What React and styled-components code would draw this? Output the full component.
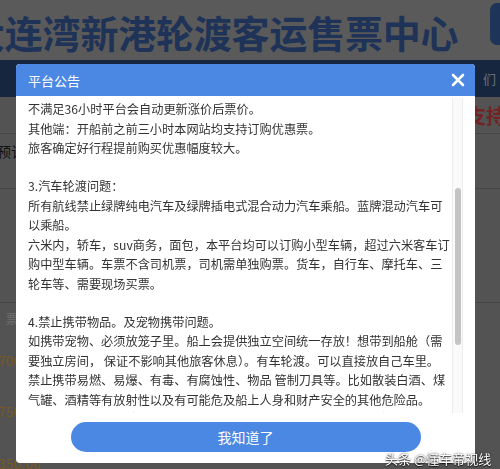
import React from "react";
import styled, { createGlobalStyle } from "styled-components";

const Global = createGlobalStyle`
  html, body { margin: 0; padding: 0; }
  body {
    width: 500px;
    height: 469px;
    overflow: hidden;
    font-family: "Noto Sans CJK SC", "Noto Sans", sans-serif;
    background: #a8a8a8;
  }
`;

/* ---------- background page ---------- */
const Page = styled.div`
  width: 500px;
  height: 469px;
  overflow: hidden;
  background: #a6a6a6;
  display: flex;
  flex-direction: column;
`;

const TopHeader = styled.header`
  height: 60px;
  flex: none;
  background: #b4b4b4;
  display: flex;
  align-items: center;
  justify-content: space-between;
  overflow: hidden;
`;

const SiteTitle = styled.h1`
  margin: 0 0 0 -33px;
  font-size: 38px;
  font-weight: 700;
  letter-spacing: -0.2px;
  color: #3c66ae;
  white-space: nowrap;
  line-height: 1;
  padding-top: 4px;
`;

const LoginBox = styled.div`
  width: 24px;
  height: 42px;
  margin-right: -14px;
  margin-top: -12px;
  border-radius: 7px;
  background: #3c68b0;
`;

const NavBar = styled.nav`
  height: 37px;
  flex: none;
  background: #2c4c7c;
  display: flex;
  justify-content: flex-end;
  align-items: center;
  padding-right: 4px;
  font-size: 13px;
  color: #d0dcee;
`;

const PageBody = styled.div`
  flex: 1;
  display: flex;
  flex-direction: column;
`;

const Strip = styled.div`
  height: ${(p) => p.$h}px;
  flex: none;
  display: flex;
  align-items: center;
  justify-content: space-between;
  border-bottom: ${(p) => (p.$line ? "1px solid #8a8a8a" : "none")};
  font-size: ${(p) => p.$size || 13}px;
  overflow: hidden;
`;

const PageText = styled.span`
  color: ${(p) => p.$color || "#222"};
  margin-left: ${(p) => p.$ml || 0}px;
  margin-right: ${(p) => p.$mr || 0}px;
  white-space: nowrap;
  font-weight: ${(p) => (p.$bold ? 700 : 400)};
`;

/* ---------- modal ---------- */
const Overlay = styled.div`
  position: fixed;
  inset: 0;
  background: rgba(0, 0, 0, 0.5);
  padding: 64px 0 0 16px;
`;

const Modal = styled.section`
  width: 459px;
  height: 399px;
  background: #fff;
  border-radius: 4px;
  overflow: hidden;
  display: flex;
  flex-direction: column;
`;

const ModalHeader = styled.div`
  height: 32px;
  flex: none;
  background: #4a88e4;
  display: flex;
  align-items: center;
  justify-content: space-between;
  padding: 0 8px 0 12px;
`;

const ModalTitle = styled.h2`
  margin: 0;
  font-size: 13px;
  font-weight: 400;
  color: #fff;
  line-height: 1;
`;

const CloseBtn = styled.button`
  border: 0;
  background: none;
  padding: 0;
  width: 18px;
  height: 18px;
  display: flex;
  align-items: center;
  justify-content: center;
  cursor: pointer;
`;

const BodyWrap = styled.div`
  position: relative;
  height: 317px;
  flex: none;
`;

const ScrollArea = styled.div`
  height: 100%;
  overflow: hidden;
  padding: 4px 0 0 12px;
  box-sizing: border-box;
`;

const Para = styled.div`
  margin-bottom: 18.5px;
`;

const Line = styled.div`
  font-size: 12.2px;
  line-height: 19.5px;
  height: 19.5px;
  color: #333;
  white-space: nowrap;
`;

const Track = styled.div`
  position: absolute;
  left: 436px;
  top: 2px;
  bottom: 0;
  width: 9px;
  border-left: 1px solid #ececec;
  border-right: 1px solid #ececec;
  background: #fafafa;
`;

const Thumb = styled.div`
  position: absolute;
  left: 2px;
  top: 90px;
  width: 6px;
  height: 157px;
  border-radius: 3px;
  background: #c4c4c4;
`;

const Footer = styled.div`
  flex: 1;
  display: flex;
  justify-content: center;
  padding-top: 9px;
`;

const OkButton = styled.button`
  width: 350px;
  height: 30px;
  border: 0;
  border-radius: 15px;
  background: #4a88e4;
  color: #fff;
  font-family: inherit;
  font-size: 14px;
  cursor: pointer;
`;

const Watermark = styled.div`
  position: fixed;
  left: 385px;
  top: 449px;
  font-size: 13px;
  color: #fff;
  text-shadow: 0 0 2px rgba(0, 0, 0, 0.8), 0 1px 1px rgba(0, 0, 0, 0.7);
  white-space: nowrap;
`;

const paragraphs = [
  [
    "不满足36小时平台会自动更新涨价后票价。",
    "其他端：开船前之前三小时本网站均支持订购优惠票。",
    "旅客确定好行程提前购买优惠幅度较大。",
  ],
  [
    "3.汽车轮渡问题：",
    "所有航线禁止绿牌纯电汽车及绿牌插电式混合动力汽车乘船。蓝牌混动汽车可",
    "以乘船。",
    "六米内，轿车，suv商务，面包，本平台均可以订购小型车辆，超过六米客车订",
    "购中型车辆。车票不含司机票，司机需单独购票。货车，自行车、摩托车、三",
    "轮车等、需要现场买票。",
  ],
  [
    "4.禁止携带物品。及宠物携带问题。",
    "如携带宠物、必须放笼子里。船上会提供独立空间统一存放！想带到船舱（需",
    "要独立房间， 保证不影响其他旅客休息）。有车轮渡。可以直接放自己车里。",
    "禁止携带易燃、易爆、有毒、有腐蚀性、物品 管制刀具等。比如散装白酒、煤",
    "气罐、酒精等有放射性以及有可能危及船上人身和财产安全的其他危险品。",
    "液体、锂电池等危险物品，严禁携带上船，一经发现将移交有关部门处理。",
  ],
];

function CloseIcon() {
  return (
    <svg width="14" height="14" viewBox="0 0 14 14">
      <path d="M2 2 L12 12 M12 2 L2 12" stroke="#fff" strokeWidth="2.6" strokeLinecap="round" />
    </svg>
  );
}

export default function App() {
  return (
    <>
      <Global />
      <Page>
        <TopHeader>
          <SiteTitle>大连湾新港轮渡客运售票中心</SiteTitle>
          <LoginBox />
        </TopHeader>
        <NavBar>们</NavBar>
        <PageBody>
          <Strip $h={36} $line $size={20}>
            <span />
            <PageText $color="#e04848" $bold $mr={-6}>支持</PageText>
          </Strip>
          <Strip $h={34} $size={14}>
            <PageText $ml={-3}>预订</PageText>
          </Strip>
          <Strip $h={20} $line />
          <Strip $h={113} $line />
          <Strip $h={30} $size={12}>
            <PageText $color="#dcdcdc" $ml={6}>票</PageText>
          </Strip>
          <Strip $h={54} $size={14}>
            <PageText $color="#f0b040" $ml={-2}>700.00</PageText>
          </Strip>
          <Strip $h={48} $size={14}>
            <PageText $color="#f0b040" $ml={-2}>750.00</PageText>
          </Strip>
          <Strip $h={56} $size={14}>
            <PageText $color="#f0b040" $ml={-2}>350.00</PageText>
          </Strip>
        </PageBody>
      </Page>

      <Overlay>
        <Modal>
          <ModalHeader>
            <ModalTitle>平台公告</ModalTitle>
            <CloseBtn aria-label="关闭">
              <CloseIcon />
            </CloseBtn>
          </ModalHeader>
          <BodyWrap>
            <ScrollArea>
              {paragraphs.map((lines, i) => (
                <Para key={i}>
                  {lines.map((t, j) => (
                    <Line key={j}>{t}</Line>
                  ))}
                </Para>
              ))}
            </ScrollArea>
            <Track>
              <Thumb />
            </Track>
          </BodyWrap>
          <Footer>
            <OkButton>我知道了</OkButton>
          </Footer>
        </Modal>
      </Overlay>
      <Watermark>头条 @懂车帝视线</Watermark>
    </>
  );
}
